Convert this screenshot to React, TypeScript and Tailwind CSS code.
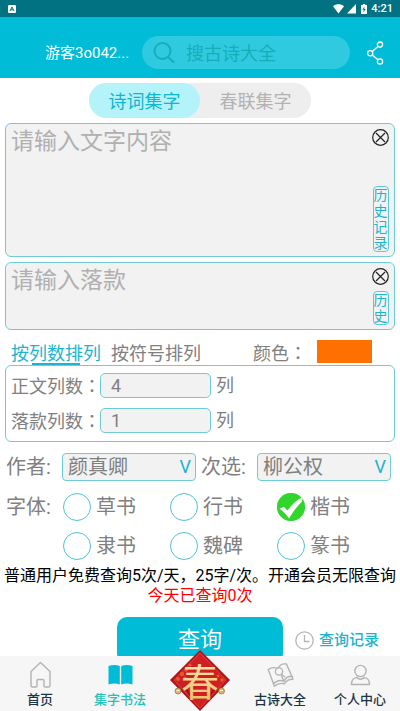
import { useState, type ReactNode } from "react";

type TextPanelProps = {
  placeholder: string;
  historyLabel: string;
  className: string;
};

type NavItemProps = {
  label: string;
  active?: boolean;
  children: ReactNode;
};

const SCRIPTS = ["草书", "行书", "楷书", "隶书", "魏碑", "篆书"];
const AUTHORS = ["颜真卿", "柳公权", "欧阳询", "赵孟頫"];

function StatusBar() {
  return (
    <div className="flex h-[17px] shrink-0 items-center justify-between bg-[#007281] pl-2 pr-[7px] text-white">
      <svg className="h-2 w-2" viewBox="0 0 8 8">
        <rect width="8" height="8" rx="1" fill="#fff" />
        <path d="M2 6 4 2 6 6M2.8 4.8h2.4" fill="none" stroke="#007281" />
      </svg>
      <div className="flex items-center gap-[3px]">
        <svg className="h-[10px] w-[11px]" viewBox="0 0 11 10" fill="currentColor">
          <path d="M0 2.2C3.2-.4 7.8-.4 11 2.2L5.5 9.6Z" />
        </svg>
        <svg className="h-[10px] w-[9px]" viewBox="0 0 9 10" fill="currentColor">
          <path d="M9 0v9.5H0Z" />
        </svg>
        <svg className="ml-0.5 h-[10px] w-[6px]" viewBox="0 0 6 10">
          <path d="M1.8 0h2.4v1H6v9H0V1h1.8Z" fill="#fff" />
          <path d="M3.6 2.4 1.4 5.8h1.4L2.4 8.4l2.2-3.5H3.2Z" fill="#007281" />
        </svg>
        <span className="ml-px text-[11px] font-medium leading-4">4:21</span>
      </div>
    </div>
  );
}

function Header() {
  return (
    <header className="flex h-[61px] shrink-0 items-center bg-[#00bcd7] pl-[45px] pr-4 pt-[10px]">
      <button className="w-[85px] shrink-0 whitespace-nowrap text-left text-[15px] leading-6 text-white">
        游客3o042...
      </button>
      <label className="ml-3 flex h-[33px] min-w-0 flex-1 items-center rounded-full bg-[#2fcadf] pl-[11px]">
        <svg
          className="h-[22px] w-[22px] shrink-0"
          viewBox="0 0 22 22"
          fill="none"
          stroke="#16adba"
          strokeWidth="2"
          strokeLinecap="round"
        >
          <circle cx="9.5" cy="9" r="8" />
          <path d="m15.2 15 5.3 5.3" />
        </svg>
        <input
          type="search"
          aria-label="搜古诗大全"
          placeholder="搜古诗大全"
          className="ml-[11px] w-full min-w-0 bg-transparent pt-0.5 text-[18px] leading-7 text-white outline-none placeholder:text-[#16adb8]"
        />
      </label>
      <button aria-label="分享" className="ml-4">
        <svg className="h-6 w-[18px]" viewBox="0 0 18 24" fill="none" stroke="#fff" strokeWidth="1.3">
          <circle cx="14" cy="3.6" r="2.6" />
          <circle cx="4.2" cy="12.2" r="2.6" />
          <circle cx="14" cy="20.4" r="2.6" />
          <path d="m12 5.4-5.8 5M6.2 14l5.8 4.7" />
        </svg>
      </button>
    </header>
  );
}

function TextPanel({ placeholder, historyLabel, className }: TextPanelProps) {
  const [text, setText] = useState("");

  return (
    <div className={`mx-[5px] flex rounded-md border border-[#6fcbd8] bg-[#f2f2f2] ${className}`}>
      <textarea
        aria-label={placeholder}
        placeholder={placeholder}
        value={text}
        onChange={(e) => setText(e.target.value)}
        className="min-w-0 flex-1 resize-none bg-transparent pl-[5px] pt-0.5 text-[23px] leading-8 text-[#777] outline-none placeholder:text-[#b0b0b0]"
      />
      <div className="mr-[5px] flex w-[17px] flex-col items-center justify-between pb-1 pt-[5px]">
        <button aria-label="清空" onClick={() => setText("")}>
          <svg className="h-[17px] w-[17px]" viewBox="0 0 17 17" fill="none" stroke="#222" strokeWidth="1.2">
            <circle cx="8.5" cy="8.5" r="7.8" />
            <path d="m4 4 9 9M13 4l-9 9" />
          </svg>
        </button>
        <button className="w-[16px] break-all rounded-[4px] border border-[#5cc8d8] text-center text-[14px] leading-4 text-[#1db4cc]">
          {historyLabel}
        </button>
      </div>
    </div>
  );
}

// 全角冒号居中显示
function Colon() {
  return <span className="font-['Noto_Sans_CJK_JP',sans-serif]">：</span>;
}

function CountRow({ label, initial }: { label: string; initial: string }) {
  return (
    <label className="flex h-[25px] items-center text-[18px] leading-6 text-[#808080]">
      <span className="w-[89px] shrink-0 whitespace-nowrap">
        {label}
        <Colon />
      </span>
      <input
        type="text"
        inputMode="numeric"
        defaultValue={initial}
        className="h-[25px] w-[111px] rounded-[5px] border border-[#6fcbd8] bg-[#f2f2f2] pl-[10px] text-[18px] outline-none"
      />
      <span className="ml-[5px]">列</span>
    </label>
  );
}

function AuthorSelect({ label, initial }: { label: string; initial: string }) {
  return (
    <label className="flex min-w-0 items-center">
      <span className="w-14 shrink-0">{label}:</span>
      <span className="relative min-w-0 flex-1">
        <select
          defaultValue={initial}
          className="block h-7 w-full appearance-none rounded-[4px] border border-[#6fcbd8] bg-[#f2f2f2] pl-[5px] text-[20px] leading-[26px] outline-none"
        >
          {AUTHORS.map((name) => (
            <option key={name}>{name}</option>
          ))}
        </select>
        <span className="pointer-events-none absolute right-[5px] top-0 text-[18px] leading-7 text-[#1db4cc]">
          V
        </span>
      </span>
    </label>
  );
}

function ScriptRadio({
  name,
  checked,
  onSelect,
}: {
  name: string;
  checked: boolean;
  onSelect: () => void;
}) {
  return (
    <label className="flex items-center gap-[5px]">
      <span className="relative h-7 w-7 shrink-0">
        <input
          type="radio"
          name="script"
          checked={checked}
          onChange={onSelect}
          className="block h-7 w-7 appearance-none rounded-full border border-[#4cc3d6]"
        />
        {checked && (
          <svg className="pointer-events-none absolute inset-0" viewBox="0 0 28 28">
            <circle cx="14" cy="14" r="14" fill="#30d62c" />
            <path
              d="M2.5 15.8 6.8 13.8 10.6 17.6C14.5 12 19 7.5 25.2 4.6L25 8.5C20.5 13 16 18.5 12 25.6 9.5 21.6 6.5 18.5 2.5 15.8Z"
              fill="#fff"
            />
          </svg>
        )}
      </span>
      <span className="whitespace-nowrap">{name}</span>
    </label>
  );
}

function NavItem({ label, active, children }: NavItemProps) {
  return (
    <a
      href="#"
      aria-current={active ? "page" : undefined}
      className={`flex flex-col items-center gap-0.5 whitespace-nowrap pt-[5px] text-[13px] font-medium leading-5 ${
        active ? "text-[#1fc3b9]" : "text-[#1d3346]"
      }`}
    >
      <svg
        className="h-[27px] w-[27px]"
        viewBox="0 0 27 27"
        fill="none"
        stroke="#b3b3b3"
        strokeWidth="1.4"
        strokeLinejoin="round"
        strokeLinecap="round"
      >
        {children}
      </svg>
      {label}
    </a>
  );
}

function FestivalBadge() {
  return (
    <svg
      className="absolute bottom-0 left-1/2 h-[61px] w-[60px] -translate-x-1/2"
      viewBox="0 0 60 61"
    >
      <defs>
        <linearGradient id="gold" x1="0" y1="0" x2="0" y2="1">
          <stop offset="0" stopColor="#fff0b8" />
          <stop offset="1" stopColor="#e9b964" />
        </linearGradient>
      </defs>
      <path d="M30 0 60 30 30 61 0 30Z" fill="#b3131a" />
      <path d="M30 3 56 30 30 58 4 30Z" fill="#cf1f22" stroke="#e2553a" strokeWidth=".8" />
      <g fill="#e8572f">
        <circle cx="12" cy="24" r="2.2" />
        <circle cx="16" cy="20" r="1.8" />
        <circle cx="8" cy="29" r="2" />
        <circle cx="15" cy="28" r="1.5" />
        <circle cx="20" cy="15" r="1.6" />
        <circle cx="52" cy="30" r="1.8" />
        <circle cx="48" cy="26" r="1.4" />
      </g>
      <path d="M12 38q6 1 8 8M48 38q-5 1-8 8" fill="none" stroke="#8d0d14" strokeWidth="1.4" />
      <text
        x="30"
        y="46"
        textAnchor="middle"
        fontSize="38"
        fill="url(#gold)"
        className="font-['Noto_Sans_CJK_SC',sans-serif]"
      >
        春
      </text>
      <g fill="#d8b878" stroke="#87602c" strokeWidth=".6">
        <circle cx="8" cy="41" r="3" />
        <circle cx="51.5" cy="41" r="3" />
      </g>
      <path d="M6.5 40.5h3M50 40.5h3" stroke="#fff1c7" />
    </svg>
  );
}

function BottomNav() {
  return (
    <nav className="relative grid h-[55px] shrink-0 grid-cols-5 bg-[#f6f6f6]">
      <NavItem label="首页">
        <path d="M4 10.5 13.5 1.5 23 10.5V24.5a1.5 1.5 0 0 1-1.5 1.5H18a1 1 0 0 1-1-1V19.5a1 1 0 0 0-1-1h-5a1 1 0 0 0-1 1V25a1 1 0 0 1-1 1H5.5A1.5 1.5 0 0 1 4 24.5Z" />
      </NavItem>
      <NavItem label="集字书法" active>
        <path
          d="M1.5 5C5 3.6 9.5 3.6 12.8 5V23.5C9.5 22.2 5 22.2 1.5 23.5ZM14.2 5C17.5 3.6 22 3.6 25.5 5V23.5C22 22.2 17.5 22.2 14.2 23.5Z"
          fill="#00bcd7"
          stroke="none"
        />
      </NavItem>
      <a href="#" aria-label="春联">
        <FestivalBadge />
      </a>
      <NavItem label="古诗大全">
        <path d="M1.2 8.5C4 6.5 7.5 6 10.8 7.6 12.3 4.5 15.5 2.4 19.4 3L25 15.6C21.6 15 18.6 16.6 17 20.2 13.5 18.8 9.3 19.8 6.5 22.8Z" />
        <path d="M6.5 22.8 7.3 25.2C10.3 22.6 13.8 21.8 17.6 22.7 19.3 19.5 22.2 18 26 18.2L25 15.6M14.5 15l2.5 5.2" />
        <circle cx="12" cy="10.5" r="3.6" fill="#f6f6f6" />
        <path d="m14.4 13.2 3.2 2.6" />
      </NavItem>
      <NavItem label="个人中心">
        <circle cx="13.5" cy="10" r="5.6" />
        <path d="M4.5 23.5C4.5 19.5 6.3 17 9.6 16.6 12 18.6 15 18.6 17.4 16.6 20.7 17 22.5 19.5 22.5 23.5Z" />
      </NavItem>
    </nav>
  );
}

export default function App() {
  const [mode, setMode] = useState("诗词集字");
  const [layout, setLayout] = useState("按列数排列");
  const [script, setScript] = useState("楷书");

  return (
    <div className="flex h-screen flex-col bg-white font-[Roboto,'Noto_Sans_CJK_SC',sans-serif]">
      <StatusBar />
      <Header />

      <main className="min-h-0 flex-1 overflow-y-auto [scrollbar-width:none]">
        <div className="mx-auto mt-[5px] flex h-[35px] w-[222px] rounded-full bg-[#eee]">
          {["诗词集字", "春联集字"].map((item) => (
            <button
              key={item}
              onClick={() => setMode(item)}
              className={`flex-1 rounded-full pt-0.5 text-[18px] leading-7 ${
                mode === item ? "bg-[#b5f3fb] text-[#10b5ce]" : "text-[#b2b2b2]"
              }`}
            >
              {item}
            </button>
          ))}
        </div>

        <TextPanel placeholder="请输入文字内容" historyLabel="历史记录" className="mt-[5px] h-[134px]" />
        <TextPanel placeholder="请输入落款" historyLabel="历史" className="mt-[5px] h-[68px]" />

        <div className="flex h-[35px] items-end gap-[10px] pl-[11px] pr-7 text-[18px] leading-[22px] text-[#808080]">
          {["按列数排列", "按符号排列"].map((item) => (
            <button
              key={item}
              onClick={() => setLayout(item)}
              className={`relative whitespace-nowrap ${layout === item ? "text-[#1db4cc]" : ""}`}
            >
              {item}
              {layout === item && (
                <span className="absolute bottom-0 left-1/2 h-0.5 w-12 -translate-x-1/2 bg-[#1db4cc]" />
              )}
            </button>
          ))}
          <label htmlFor="color" className="ml-auto whitespace-nowrap">
            颜色
            <Colon />
          </label>
          <button id="color" className="mb-0.5 h-[23px] w-[55px] bg-[#ff7000]" />
        </div>

        <div className="mx-[5px] flex flex-col gap-[10px] rounded-md border border-[#6fcbd8] pb-2 pl-[5px] pt-[7px]">
          <CountRow label="正文列数" initial="4" />
          <CountRow label="落款列数" initial="1" />
        </div>

        <div className="ml-[6px] mr-[9px] mt-[11px] grid grid-cols-2 gap-[5px] text-[20px] leading-7 text-[#808080]">
          <AuthorSelect label="作者" initial="颜真卿" />
          <AuthorSelect label="次选" initial="柳公权" />
        </div>

        <div
          role="radiogroup"
          aria-label="字体"
          className="ml-[6px] mr-4 mt-3 flex text-[20px] leading-7 text-[#808080]"
        >
          <span className="w-[57px] shrink-0">字体:</span>
          <div className="grid flex-1 grid-cols-3 gap-y-[11px]">
            {SCRIPTS.map((name) => (
              <ScriptRadio
                key={name}
                name={name}
                checked={script === name}
                onSelect={() => setScript(name)}
              />
            ))}
          </div>
        </div>

        <div className="mt-[6px] whitespace-nowrap text-center text-[16px] leading-5">
          <p className="text-black">普通用户免费查询5次/天，25字/次。开通会员无限查询</p>
          <p className="text-[#f00]">今天已查询0次</p>
        </div>

        <div className="mt-[11px] grid grid-cols-[1fr_166px_1fr]">
          <button className="col-start-2 h-[46px] rounded-[10px] bg-[#00bcd7] text-[22px] leading-8 text-white">
            查询
          </button>
          <a
            href="#"
            className="ml-3 flex items-center gap-[5px] whitespace-nowrap text-[15px] font-medium leading-6 text-[#1db4cc]"
          >
            <svg className="h-[19px] w-[19px]" viewBox="0 0 19 19" fill="none" stroke="#b5b5b5" strokeWidth="1.3">
              <circle cx="9.5" cy="9.5" r="8.7" />
              <path d="M9.5 4v6.5h5" />
            </svg>
            查询记录
          </a>
        </div>
      </main>

      <BottomNav />
    </div>
  );
}
